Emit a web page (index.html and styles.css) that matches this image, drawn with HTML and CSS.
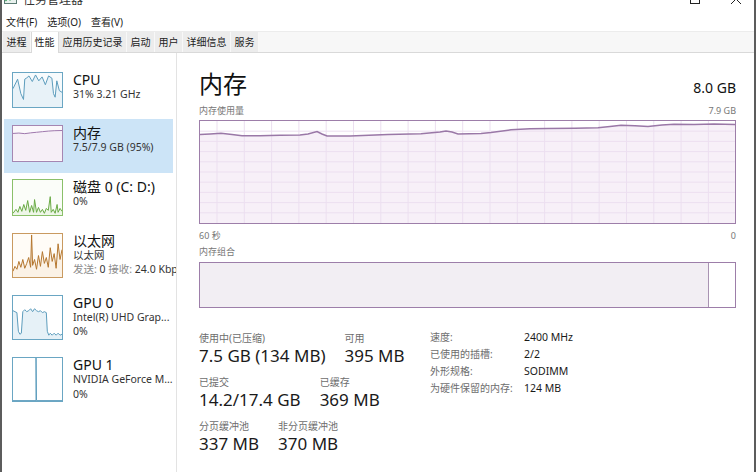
FILE: index.html
```html
<!DOCTYPE html>
<html lang="zh-CN">
<head>
<meta charset="utf-8">
<title>任务管理器</title>
<link rel="stylesheet" href="styles.css">
</head>
<body>
<div class="window">
  <div class="titlebar">
    <div class="app-title">
      <svg class="app-icon" viewBox="0 0 13 12" width="13" height="12">
        <rect x="0.5" y="0.5" width="12" height="11" fill="#e9f1ee" stroke="#5b7c74"/>
        <polyline points="1.5,9 4,6 6,8 8.5,4 11.5,7" fill="none" stroke="#2f9c52" stroke-width="1.2"/>
      </svg>
      <span>任务管理器</span>
    </div>
    <div class="caption">
      <svg class="cap-max" viewBox="0 0 10 10" width="10" height="10"><rect x="0.5" y="0.5" width="9" height="9" fill="none" stroke="#222"/></svg>
      <svg class="cap-close" viewBox="0 0 12 12" width="12" height="12"><path d="M1 1L11 11M11 1L1 11" stroke="#222" stroke-width="1"/></svg>
    </div>
  </div>

  <div class="menubar">
    <span class="menu-item">文件(F)</span>
    <span class="menu-item">选项(O)</span>
    <span class="menu-item">查看(V)</span>
  </div>

  <div class="tabstrip">
    <span class="tab">进程</span>
    <span class="tab active">性能</span>
    <span class="tab">应用历史记录</span>
    <span class="tab">启动</span>
    <span class="tab">用户</span>
    <span class="tab">详细信息</span>
    <span class="tab">服务</span>
  </div>

  <div class="content">
    <aside class="sidebar">
      <div class="res-item">
        <div class="thumb thumb-cpu">
          <svg viewBox="0 0 50 35" preserveAspectRatio="none">
            <polygon points="0,16 4.7,6.3 8,21 10.7,27 12,6.3 14,5 16.3,3 19.7,8.7 23,2 26.3,8 29.7,4 33,12 36.3,3 39.7,5.3 41.3,21 43,24.7 44.7,8 47.3,18 50,19.7 50,35 0,35" fill="#e8f2f8"/>
            <polyline points="0,16 4.7,6.3 8,21 10.7,27 12,6.3 14,5 16.3,3 19.7,8.7 23,2 26.3,8 29.7,4 33,12 36.3,3 39.7,5.3 41.3,21 43,24.7 44.7,8 47.3,18 50,19.7" fill="none" stroke="#5d9dbd" stroke-width="1" vector-effect="non-scaling-stroke"/>
          </svg>
        </div>
        <div class="res-text">
          <div class="res-name">CPU</div>
          <div class="res-sub">31% 3.21 GHz</div>
        </div>
      </div>

      <div class="res-item selected">
        <div class="thumb thumb-mem">
          <svg viewBox="0 0 50 35" preserveAspectRatio="none">
            <polygon points="0,7.6 6,7.2 12,7.8 18,7 24,6.4 30,5.8 36,5.2 42,4.8 50,4.6 50,35 0,35" fill="#f6eff7"/>
            <polyline points="0,7.6 6,7.2 12,7.8 18,7 24,6.4 30,5.8 36,5.2 42,4.8 50,4.6" fill="none" stroke="#9f78ad" stroke-width="1" vector-effect="non-scaling-stroke"/>
          </svg>
        </div>
        <div class="res-text">
          <div class="res-name">内存</div>
          <div class="res-sub">7.5/7.9 GB (95%)</div>
        </div>
      </div>

      <div class="res-item">
        <div class="thumb thumb-disk">
          <svg viewBox="0 0 50 36" preserveAspectRatio="none">
            <polygon points="0,34 3,30 5,33 7,27 9,32 11,25 13,31 15,21 17,33 19,26 21,33 22,20 24,33 26,28 28,33 30,30 32,34 34,29 36,31 38,17 39,33 41,30 43,34 45,25 46,33 48,29 50,32 50,36 0,36" fill="#eef6e8"/>
            <polyline points="0,34 3,30 5,33 7,27 9,32 11,25 13,31 15,21 17,33 19,26 21,33 22,20 24,33 26,28 28,33 30,30 32,34 34,29 36,31 38,17 39,33 41,30 43,34 45,25 46,33 48,29 50,32" fill="none" stroke="#6aab45" stroke-width="1" vector-effect="non-scaling-stroke"/>
          </svg>
        </div>
        <div class="res-text">
          <div class="res-name">磁盘 0 (C: D:)</div>
          <div class="res-sub">0%</div>
        </div>
      </div>

      <div class="res-item">
        <div class="thumb thumb-net">
          <svg viewBox="0 0 50 44" preserveAspectRatio="none">
            <polygon points="0,38 2,33 4,36 6,28 8,34 10,26 12,35 14,30 16,24 18,34 19,1 20,32 22,26 24,36 26,22 28,33 30,18 32,30 34,24 36,34 38,14 40,28 42,20 44,35 46,10 48,26 50,16 50,44 0,44" fill="#fbf2e6"/>
            <polyline points="0,38 2,33 4,36 6,28 8,34 10,26 12,35 14,30 16,24 18,34 19,1 20,32 22,26 24,36 26,22 28,33 30,18 32,30 34,24 36,34 38,14 40,28 42,20 44,35 46,10 48,26 50,16" fill="none" stroke="#b5772f" stroke-width="1" vector-effect="non-scaling-stroke"/>
          </svg>
        </div>
        <div class="res-text">
          <div class="res-name">以太网</div>
          <div class="res-sub">以太网</div>
          <div class="res-sub"><span class="dim">发送:</span> 0 <span class="dim">接收:</span> 24.0 Kbps</div>
        </div>
      </div>

      <div class="res-item">
        <div class="thumb thumb-gpu">
          <svg viewBox="0 0 50 44" preserveAspectRatio="none">
            <polygon points="0,15 2,16 4,17 5.5,36 7,39 8.5,38 10,16 12,14 14,16 16,15 18,13 20,16 22,13 24,15 26,16 28,15 30,17 32,16 34,17 35,36 36.5,40 38,38 40,40 42,38 44,40 46,38 48,40 50,39 50,44 0,44" fill="#e6f1f7"/>
            <polyline points="0,15 2,16 4,17 5.5,36 7,39 8.5,38 10,16 12,14 14,16 16,15 18,13 20,16 22,13 24,15 26,16 28,15 30,17 32,16 34,17 35,36 36.5,40 38,38 40,40 42,38 44,40 46,38 48,40 50,39" fill="none" stroke="#5d9dbd" stroke-width="1" vector-effect="non-scaling-stroke"/>
          </svg>
        </div>
        <div class="res-text">
          <div class="res-name">GPU 0</div>
          <div class="res-sub">Intel(R) UHD Grap...</div>
          <div class="res-sub">0%</div>
        </div>
      </div>

      <div class="res-item">
        <div class="thumb thumb-gpu">
          <svg viewBox="0 0 50 44" preserveAspectRatio="none">
            <polyline points="0,43.5 23.5,43.5 23.5,0 24,43.5 50,43.5" fill="none" stroke="#5d9dbd" stroke-width="1" vector-effect="non-scaling-stroke"/>
          </svg>
        </div>
        <div class="res-text">
          <div class="res-name">GPU 1</div>
          <div class="res-sub">NVIDIA GeForce M...</div>
          <div class="res-sub">0%</div>
        </div>
      </div>
    </aside>

    <main class="detail">
      <div class="head">
        <h1 class="title">内存</h1>
        <div class="capacity">8.0 GB</div>
      </div>

      <div class="chart-head">
        <span>内存使用量</span>
        <span>7.9 GB</span>
      </div>
      <div class="chart">
        <svg viewBox="0 0 535 102" width="535" height="102">
          <polygon class="usage-fill" points="0,13.5 10,13 21,12.3 32,13.5 42,14.8 60,14.8 80,14.3 100,14 108,13 117,10.5 122,13 127,15 150,15 188,13.5 221,12.8 240,11 246,10 252,11 258,13 281,12.5 291,11.5 311,8.8 330,7.8 348,7.5 375,7.3 398,6.8 410,5.5 421,4.2 435,4.8 448,5.5 462,4 474,3.2 494,3.5 514,3 535,3.5 535,102 0,102"/>
          <path class="grid" d="M17 0V102M44.3 0V102M71.6 0V102M98.9 0V102M126.2 0V102M153.5 0V102M180.8 0V102M208.1 0V102M235.4 0V102M262.7 0V102M290 0V102M317.3 0V102M344.6 0V102M371.9 0V102M399.2 0V102M426.5 0V102M453.8 0V102M481.1 0V102M508.4 0V102M0 10.2H535M0 20.4H535M0 30.6H535M0 40.8H535M0 51H535M0 61.2H535M0 71.4H535M0 81.6H535M0 91.8H535"/>
          <polyline class="usage-line" points="0,13.5 10,13 21,12.3 32,13.5 42,14.8 60,14.8 80,14.3 100,14 108,13 117,10.5 122,13 127,15 150,15 188,13.5 221,12.8 240,11 246,10 252,11 258,13 281,12.5 291,11.5 311,8.8 330,7.8 348,7.5 375,7.3 398,6.8 410,5.5 421,4.2 435,4.8 448,5.5 462,4 474,3.2 494,3.5 514,3 535,3.5"/>
        </svg>
      </div>
      <div class="chart-foot">
        <span>60 秒</span>
        <span>0</span>
      </div>

      <div class="comp-label">内存组合</div>
      <div class="comp-bar">
        <div class="comp-used"></div>
        <div class="comp-free"></div>
      </div>

      <div class="stats-area">
        <div class="stats">
          <div class="stat-row">
            <div class="stat">
              <div class="stat-label">使用中(已压缩)</div>
              <div class="stat-value">7.5 GB (134 MB)</div>
            </div>
            <div class="stat">
              <div class="stat-label">可用</div>
              <div class="stat-value">395 MB</div>
            </div>
          </div>
          <div class="stat-row">
            <div class="stat">
              <div class="stat-label">已提交</div>
              <div class="stat-value">14.2/17.4 GB</div>
            </div>
            <div class="stat">
              <div class="stat-label">已缓存</div>
              <div class="stat-value">369 MB</div>
            </div>
          </div>
          <div class="stat-row">
            <div class="stat">
              <div class="stat-label">分页缓冲池</div>
              <div class="stat-value">337 MB</div>
            </div>
            <div class="stat">
              <div class="stat-label">非分页缓冲池</div>
              <div class="stat-value">370 MB</div>
            </div>
          </div>
        </div>

        <div class="info">
          <span class="info-label">速度:</span><span class="info-value">2400 MHz</span>
          <span class="info-label">已使用的插槽:</span><span class="info-value">2/2</span>
          <span class="info-label">外形规格:</span><span class="info-value">SODIMM</span>
          <span class="info-label">为硬件保留的内存:</span><span class="info-value">124 MB</span>
        </div>
      </div>
    </main>
  </div>
</div>
</body>
</html>
```

FILE: styles.css
```css
* { box-sizing: border-box; }

html, body {
  margin: 0;
  padding: 0;
}

body {
  width: 756px;
  height: 472px;
  overflow: hidden;
  background: #ffffff;
  font-family: "Noto Sans", "Noto Sans CJK SC", sans-serif;
  color: #1a1a1a;
}

.window {
  height: 472px;
  border-left: 2px solid #5c5c5c;
  border-right: 2px solid #5c5c5c;
  display: flex;
  flex-direction: column;
  overflow: hidden;
  background: #ffffff;
}

/* ---------- title bar (mostly cut off) ---------- */
.titlebar {
  height: 11px;
  flex: none;
  display: flex;
  align-items: flex-start;
  overflow: hidden;
}

.app-title {
  display: flex;
  align-items: flex-start;
  gap: 6px;
  margin-top: -8px;
  margin-left: 2px;
  font-size: 12px;
  line-height: 16px;
  color: #333333;
}

.app-icon { display: block; flex: none; }

.caption {
  margin-left: auto;
  display: flex;
  align-items: flex-start;
  padding-right: 12px;
}

.cap-max { display: block; margin-top: -6px; }
.cap-close { display: block; margin-top: -7px; margin-left: 30px; }

/* ---------- menu ---------- */
.menubar {
  height: 20px;
  flex: none;
  display: flex;
  gap: 2px;
  padding-top: 3px;
  font-size: 10px;
  line-height: 17px;
  color: #1a1a1a;
}

.menu-item { padding: 0 4px; }

/* ---------- tabs ---------- */
.tabstrip {
  height: 22px;
  flex: none;
  display: flex;
  padding-left: 1px;
  background: #f7f7f7;
  border-top: 1px solid #ececec;
  border-bottom: 1px solid #d9d9d9;
  font-size: 10px;
}

.tab {
  padding: 1px 3.5px 0;
  line-height: 19px;
  background: #ececec;
  border-right: 1px solid #f8f8f8;
  color: #222222;
}

.tab.active {
  background: #ffffff;
  border-left: 1px solid #d9d9d9;
  border-right: 1px solid #d9d9d9;
  padding-left: 2.5px;
  height: 21px;
}

/* ---------- main area ---------- */
.content {
  flex: 1;
  min-height: 0;
  display: flex;
}

.sidebar {
  width: 175px;
  flex: none;
  border-right: 1px solid #e3e3e3;
  padding: 13px 0 0 2px;
  overflow: hidden;
}

.res-item {
  width: 169px;
  display: flex;
  gap: 10px;
  padding: 6px 0 11px 8px;
  white-space: nowrap;
}

.res-item.selected { background: #cce4f7; }

.thumb {
  width: 51px;
  min-height: 36px;
  flex: none;
  align-self: stretch;
  border: 1px solid #6aa6c3;
  background: #ffffff;
}

.thumb svg { display: block; width: 100%; height: 100%; }

.thumb-cpu { border-color: #6aa6c3; background: #f7fbfd; }
.thumb-mem { border-color: #a586b2; background: #fbf8fb; }
.thumb-disk { border-color: #8bc06a; background: #fbfdf9; }
.thumb-net { border-color: #c99a60; background: #fffcf7; }
.thumb-gpu { border-color: #6aa6c3; background: #ffffff; }

.res-name {
  font-size: 14px;
  line-height: 15px;
  color: #111111;
}

.res-sub {
  font-size: 10.5px;
  line-height: 14.5px;
  color: #333333;
}

.res-sub .dim { color: #8a8a8a; }

/* ---------- detail ---------- */
.detail {
  flex: 1;
  min-width: 0;
  padding: 15px 18px 0 22px;
  display: flex;
  flex-direction: column;
}

.head {
  height: 32px;
  display: flex;
  justify-content: space-between;
  align-items: baseline;
}

.title {
  margin: 0;
  font-size: 24px;
  line-height: 32px;
  font-weight: 400;
  color: #111111;
}

.capacity {
  font-size: 14px;
  line-height: 32px;
  color: #111111;
}

.chart-head,
.chart-foot {
  display: flex;
  justify-content: space-between;
  font-size: 9px;
  line-height: 12px;
  color: #777777;
}

.chart-head { margin-top: 5px; }

.chart {
  margin-top: 3px;
  height: 104px;
  border: 1px solid #9d7ea9;
  background: #ffffff;
}

.chart svg { display: block; }

.usage-fill { fill: #f7f0f8; }
.grid { stroke: #ecdff0; stroke-width: 1; fill: none; }
.usage-line { fill: none; stroke: #9a78a7; stroke-width: 1.6; }

.chart-foot { margin-top: 6px; }

.comp-label {
  margin-top: 4px;
  font-size: 9px;
  line-height: 12px;
  color: #777777;
}

.comp-bar {
  margin-top: 4px;
  height: 46px;
  border: 1px solid #9d7ea9;
  display: flex;
}

.comp-used {
  width: 509px;
  background: #f2eef3;
  border-right: 1px solid #a993b2;
}

.comp-free { flex: 1; background: #ffffff; }

.stats-area {
  margin-top: 21px;
  display: flex;
}

.stats {
  width: 231px;
  flex: none;
  padding-top: 2px;
  display: flex;
  flex-direction: column;
  gap: 8px;
}

.stat-row {
  display: flex;
  gap: 19px;
  white-space: nowrap;
}

.stat-label {
  font-size: 10px;
  line-height: 14px;
  color: #6d6d6d;
}

.stat-value {
  font-size: 17px;
  line-height: 22px;
  color: #1a1a1a;
}

.info {
  display: grid;
  grid-template-columns: 94px auto;
  align-content: start;
  font-size: 10.5px;
  line-height: 17px;
  white-space: nowrap;
}

.info-label { font-size: 10px; color: #6d6d6d; }
.info-value { color: #1a1a1a; }
```
